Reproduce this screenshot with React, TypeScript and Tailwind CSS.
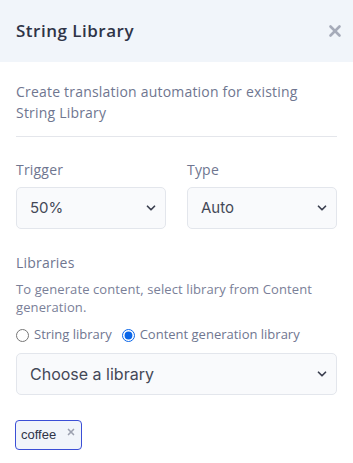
import React from 'react';
import { ChevronDown, X } from 'lucide-react';

const Select = ({ value, className }: { value: string; className?: string }) => (
  <div className={`relative ${className ?? ''}`}>
    <select
      defaultValue={value}
      className="w-full h-[42px] appearance-none rounded-[5px] border border-[#e3e6ec] bg-[#f9fafc] pl-[13px] pr-8 text-[15px] text-[#444857] outline-none [font-family:Inter,sans-serif]"
    >
      <option>{value}</option>
    </select>
    <ChevronDown size={14} strokeWidth={3} className="pointer-events-none absolute right-[8px] top-1/2 -translate-y-1/2 text-[#3c4050]" />
  </div>
);

export default function App() {
  return (
    <div className="w-[353px] h-[463px] bg-white [font-family:'Open_Sans',sans-serif] overflow-hidden">
      <div className="h-[62px] bg-[#f1f5fa] flex items-center justify-between pl-4 pr-[9px]">
        <h2 className="text-[17px] font-semibold text-[#2f3447] tracking-[0.5px]">String Library</h2>
        <X size={18} strokeWidth={3.5} className="text-[#a6abb9]" />
      </div>

      <div className="px-4">
        <p className="pt-[19px] pb-[13px] text-[14px] leading-[21px] tracking-[0.2px] text-[#6f7690] border-b border-[#e4e6eb]">
          Create translation automation for existing String Library
        </p>

        <div className="grid grid-cols-2 gap-[21px] mt-[22px]">
          <div>
            <label className="block text-[14px] leading-[21px] tracking-[0.2px] text-[#6f7690] mb-[7px]">Trigger</label>
            <Select value="50%" />
          </div>
          <div>
            <label className="block text-[14px] leading-[21px] tracking-[0.2px] text-[#6f7690] mb-[7px]">Type</label>
            <Select value="Auto" />
          </div>
        </div>

        <div className="mt-[23px]">
          <label className="block text-[14px] leading-[21px] tracking-[0.2px] text-[#6f7690]">Libraries</label>
          <p className="mt-[7px] text-[13px] leading-[18px] tracking-[0.1px] text-[#7a8098]">
            To generate content, select library from Content generation.
          </p>
          <div className="flex items-center mt-[10px] text-[13px] text-[#6f7690] h-[18px]">
            <label className="flex items-center gap-[5px]">
              <input type="radio" name="lib" className="m-0 w-[13px] h-[13px]" />
              String library
            </label>
            <label className="flex items-center gap-[5px] ml-[10px]">
              <input type="radio" name="lib" defaultChecked className="m-0 w-[13px] h-[13px] accent-[#0a66e8]" />
              Content generation library
            </label>
          </div>
          <Select value="Choose a library" className="mt-[9px] [&_select]:text-[16px]" />
        </div>

        <div className="mt-[25px] inline-flex items-center h-[30px] rounded-[4px] border border-[#3b4fd6] bg-[#f1f5fa] pl-[5px] pr-[5px] gap-[10px] -ml-px">
          <span className="text-[13px] text-[#2f3447] [font-family:'Liberation_Sans',Arial,sans-serif]">coffee</span>
          <X size={10} strokeWidth={4} className="text-[#9ca1b0] -mt-[6px]" />
        </div>
      </div>
    </div>
  );
}
